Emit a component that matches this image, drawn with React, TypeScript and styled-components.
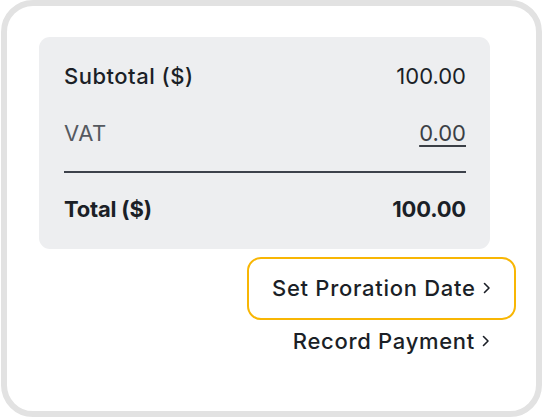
import React from "react";
import styled, { createGlobalStyle } from "styled-components";

const GlobalStyle = createGlobalStyle`
  html, body {
    margin: 0;
    padding: 0;
    background: #ffffff;
  }
  body {
    font-family: "Inter", "Noto Sans", sans-serif;
    color: #1b1f27;
  }
`;

const Frame = styled.div`
  box-sizing: border-box;
  margin-left: 1px;
  width: 541px;
  height: 417px;
  border: 6px solid #e2e2e2;
  border-radius: 32px;
  padding: 31px 20px 0 32px;
  display: flex;
  flex-direction: column;
  align-items: flex-end;
`;

const Summary = styled.div`
  box-sizing: border-box;
  align-self: flex-start;
  width: 451px;
  background: #edeef0;
  border-radius: 11px;
  padding: 21px 24px 22px 25px;
  display: flex;
  flex-direction: column;
`;

const Row = styled.div<{ $gap?: number }>`
  height: 36px;
  display: flex;
  align-items: center;
  justify-content: space-between;
  margin-top: ${(p) => p.$gap ?? 0}px;
`;

const Label = styled.span<{ $tone?: "strong" | "muted" }>`
  font-size: 22px;
  font-weight: ${(p) => (p.$tone === "strong" ? 700 : p.$tone === "muted" ? 400 : 500)};
  color: ${(p) => (p.$tone === "muted" ? "#55595f" : "#1b1f27")};
  letter-spacing: ${(p) => (p.$tone === "strong" ? -0.2 : 0.5)}px;
`;

const Amount = styled.span<{ $strong?: boolean; $underline?: boolean }>`
  font-size: 22px;
  font-weight: ${(p) => (p.$strong ? 700 : 400)};
  color: ${(p) => (p.$underline ? "#3b3f46" : "#1b1f27")};
  letter-spacing: ${(p) => (p.$strong ? -0.2 : 0)}px;
  text-decoration: ${(p) => (p.$underline ? "underline" : "none")};
  text-decoration-thickness: 1.5px;
  text-underline-offset: 4px;
`;

const Divider = styled.hr`
  border: none;
  height: 1.5px;
  background: #3d424b;
  margin: 20px 0 0;
`;

const ActionLink = styled.a<{ $focused?: boolean }>`
  box-sizing: border-box;
  display: flex;
  align-items: center;
  gap: 7px;
  height: ${(p) => (p.$focused ? 63 : 43)}px;
  padding: 0 ${(p) => (p.$focused ? 23.5 : 26)}px 0 ${(p) => (p.$focused ? 23 : 0)}px;
  border: ${(p) => (p.$focused ? "2.5px solid #f8b604" : "none")};
  border-radius: 14px;
  font-size: 22px;
  font-weight: 500;
  letter-spacing: 0.7px;
  color: #1b1f27;
  text-decoration: none;
  cursor: pointer;
`;

const Actions = styled.div`
  margin-top: 8px;
  display: flex;
  flex-direction: column;
  align-items: flex-end;
`;

const Chevron = () => (
  <svg width="8" height="12" viewBox="0 0 8 12" fill="none">
    <path d="M1.5 1.5 6 6l-4.5 4.5" stroke="#1b1f27" strokeWidth="1.6" strokeLinecap="round" strokeLinejoin="round" />
  </svg>
);

export default function App() {
  return (
    <>
      <GlobalStyle />
      <Frame>
        <Summary>
          <Row>
            <Label>Subtotal ($)</Label>
            <Amount>100.00</Amount>
          </Row>
          <Row $gap={21}>
            <Label $tone="muted">VAT</Label>
            <Amount $underline>0.00</Amount>
          </Row>
          <Divider />
          <Row $gap={18}>
            <Label $tone="strong">Total ($)</Label>
            <Amount $strong>100.00</Amount>
          </Row>
        </Summary>
        <Actions>
          <ActionLink $focused>
            Set Proration Date
            <Chevron />
          </ActionLink>
          <ActionLink>
            Record Payment
            <Chevron />
          </ActionLink>
        </Actions>
      </Frame>
    </>
  );
}
